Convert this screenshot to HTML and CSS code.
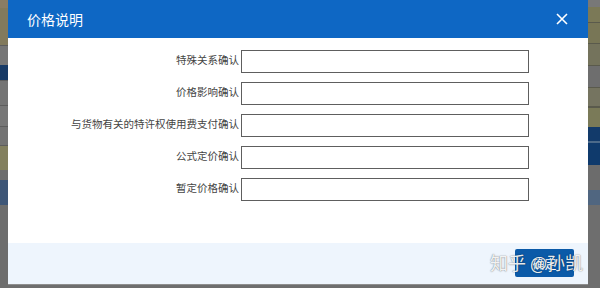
FILE: index.html
```html
<!DOCTYPE html>
<html lang="zh-CN">
<head>
<meta charset="utf-8">
<title>价格说明</title>
<link rel="stylesheet" href="styles.css">
</head>
<body>
<div class="strip strip-left">
  <div class="b" style="height:8px;background:#8a7d64"></div>
  <div class="b" style="height:37px;background:#827a5c"></div>
  <div class="b" style="height:1px;background:#5d5d5d"></div>
  <div class="b" style="height:19px;background:#767676"></div>
  <div class="b" style="height:15px;background:#173a66"></div>
  <div class="b" style="height:1px;background:#5d5d5d"></div>
  <div class="b" style="height:24px;background:#747474"></div>
  <div class="b" style="height:1px;background:#5d5d5d"></div>
  <div class="b" style="height:20px;background:#777777"></div>
  <div class="b" style="height:1px;background:#5d5d5d"></div>
  <div class="b" style="height:18px;background:#737373"></div>
  <div class="b" style="height:1px;background:#5d5d5d"></div>
  <div class="b" style="height:24px;background:#83805f"></div>
  <div class="b" style="height:10px;background:#6d6d6d"></div>
  <div class="b" style="height:25px;background:#3e5677"></div>
  <div class="b fill" style="background:#6d6d6d"></div>
</div>

<div class="dialog">
  <div class="dialog-header">
    <span class="dialog-title">价格说明</span>
    <svg class="close" width="12" height="12" viewBox="0 0 12 12">
      <path d="M1 1 L11 11 M11 1 L1 11" stroke="#ffffff" stroke-width="1.6" fill="none"/>
    </svg>
  </div>
  <div class="dialog-body">
    <div class="form">
      <label class="lbl">特殊关系确认</label><div class="inp"></div>
      <label class="lbl">价格影响确认</label><div class="inp"></div>
      <label class="lbl">与货物有关的特许权使用费支付确认</label><div class="inp"></div>
      <label class="lbl">公式定价确认</label><div class="inp"></div>
      <label class="lbl">暂定价格确认</label><div class="inp"></div>
    </div>
  </div>
  <div class="dialog-footer">
    <button class="btn">确定</button>
  </div>
</div>

<div class="strip strip-right">
  <div class="b" style="height:7px;background:#787878"></div>
  <div class="b" style="height:15px;background:#7b7957"></div>
  <div class="b" style="height:1px;background:#5a5a4c"></div>
  <div class="b" style="height:20px;background:#787656"></div>
  <div class="b" style="height:1px;background:#5a5a4c"></div>
  <div class="b" style="height:21px;background:#74735c"></div>
  <div class="b" style="height:1px;background:#5a5a4c"></div>
  <div class="b" style="height:21px;background:#6e6e6e"></div>
  <div class="b" style="height:1px;background:#5a5a4c"></div>
  <div class="b" style="height:18px;background:#757460"></div>
  <div class="b" style="height:2px;background:#5a5a4c"></div>
  <div class="b" style="height:19px;background:#7a7a58"></div>
  <div class="b" style="height:14px;background:#123a6a"></div>
  <div class="b" style="height:2px;background:#4c6a8a"></div>
  <div class="b" style="height:22px;background:#0f3a6c"></div>
  <div class="b" style="height:25px;background:#6c6c6c"></div>
  <div class="b" style="height:15px;background:#506680"></div>
  <div class="b fill" style="background:#6e6e6e"></div>
</div>

<div class="watermark">知乎 @孙凯</div>
</body>
</html>
```

FILE: styles.css
```css
html, body {
  margin: 0;
  padding: 0;
}
body {
  width: 600px;
  height: 288px;
  overflow: hidden;
  display: flex;
  align-items: flex-start;
  background: #6e6e6e;
  font-family: "Noto Sans CJK SC", "Noto Sans", sans-serif;
  position: relative;
}
.strip {
  display: flex;
  flex-direction: column;
  height: 288px;
}
.strip-left { width: 8px; }
.strip-right { width: 12px; }
.b { flex: none; }
.b.fill { flex: 1; }

.dialog {
  width: 580px;
  height: 284px;
  display: flex;
  flex-direction: column;
  background: #ffffff;
  border-bottom: 1px solid #8e8e8e;
}
.dialog-header {
  height: 38px;
  flex: none;
  background: #0e67c4;
  display: flex;
  align-items: center;
  justify-content: space-between;
  padding: 0 20px 0 19px;
  box-sizing: border-box;
}
.dialog-title {
  color: #ffffff;
  font-size: 14px;
  line-height: 1;
  letter-spacing: 0;
}
.close { display: block; }

.dialog-body {
  flex: 1;
  padding-top: 12px;
  box-sizing: border-box;
}
.form {
  display: grid;
  grid-template-columns: 231px 288px;
  column-gap: 2px;
  row-gap: 9px;
  grid-auto-rows: 23px;
}
.lbl {
  text-align: right;
  align-self: center;
  font-size: 10.5px;
  line-height: 1;
  color: #444444;
  white-space: nowrap;
  margin-top: -2px;
}
.inp {
  border: 1px solid #5e5e5e;
  background: #ffffff;
  box-sizing: border-box;
}

.dialog-footer {
  height: 41px;
  flex: none;
  background: #eef5fd;
  display: flex;
  align-items: center;
  justify-content: flex-end;
  padding-right: 14px;
  box-sizing: border-box;
}
.btn {
  width: 59px;
  height: 28px;
  margin-top: -1px;
  background: #0b5aa8;
  color: #ffffff;
  border: none;
  border-radius: 2px;
  font-family: "Noto Sans CJK SC", sans-serif;
  font-size: 12px;
  padding: 0;
}

.watermark {
  position: absolute;
  left: 490px;
  top: 250px;
  font-size: 18px;
  line-height: 24px;
  color: rgba(255, 255, 255, 0.92);
  text-shadow: 0 0 1px rgba(0, 0, 0, 0.45), 0 0 2px rgba(0, 0, 0, 0.25);
  white-space: nowrap;
  font-family: "Noto Sans CJK SC", sans-serif;
}
```
